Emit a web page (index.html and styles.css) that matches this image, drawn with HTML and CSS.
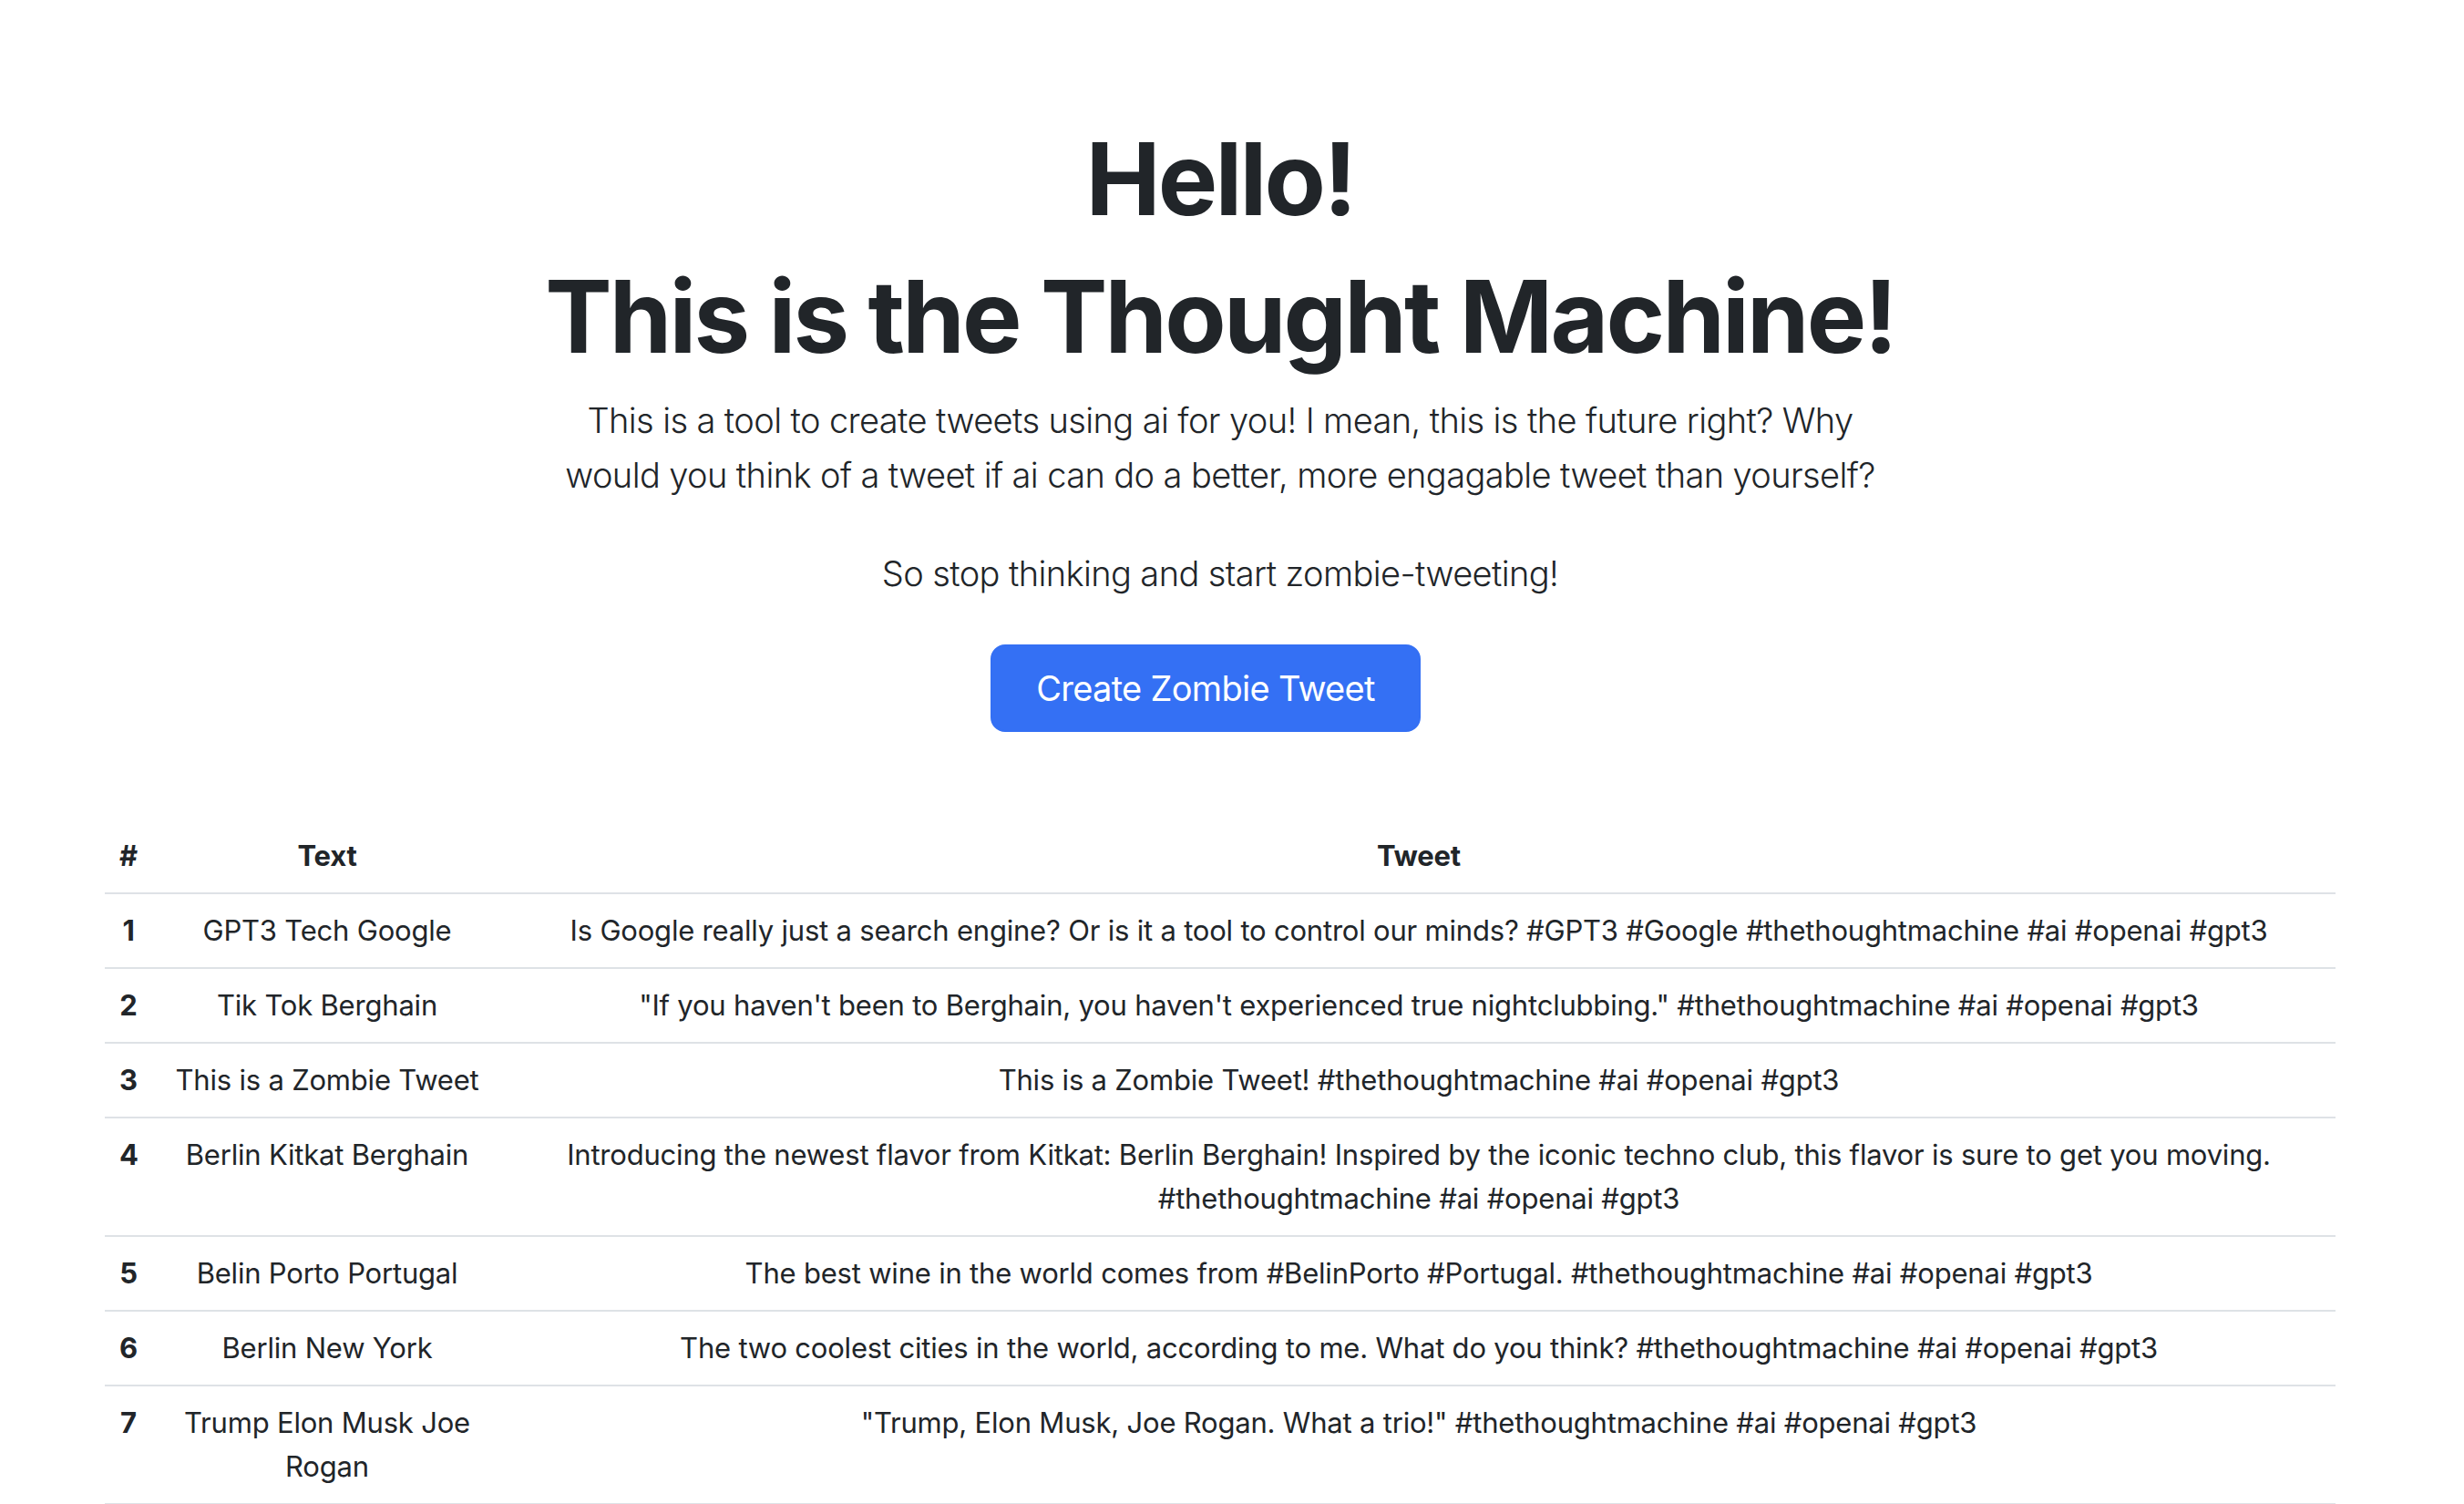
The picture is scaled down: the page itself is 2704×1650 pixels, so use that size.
FILE: index.html
```html
<!DOCTYPE html>
<html lang="en">
<head>
<meta charset="utf-8">
<title>The Thought Machine</title>
<link rel="stylesheet" href="styles.css">
</head>
<body>
<main class="page">
  <section class="hero">
    <h1 class="title">Hello!</h1>
    <h1 class="title">This is the Thought Machine!</h1>
    <div class="intro">
      <p class="lead">This is a tool to create tweets using ai for you! I mean, this is the future right? Why would you think of a tweet if ai can do a better, more engagable tweet than yourself?</p>
      <p class="lead">So stop thinking and start zombie-tweeting!</p>
      <div class="actions">
        <button type="button" class="btn">Create Zombie Tweet</button>
      </div>
    </div>
  </section>
  <table class="tweets">
    <colgroup>
      <col class="col-num">
      <col class="col-text">
      <col class="col-tweet">
    </colgroup>
    <thead>
      <tr><th>#</th><th>Text</th><th>Tweet</th></tr>
    </thead>
    <tbody>
      <tr><th>1</th><td>GPT3 Tech Google</td><td>Is Google really just a search engine? Or is it a tool to control our minds? #GPT3 #Google #thethoughtmachine #ai #openai #gpt3</td></tr>
      <tr><th>2</th><td>Tik Tok Berghain</td><td>"If you haven't been to Berghain, you haven't experienced true nightclubbing." #thethoughtmachine #ai #openai #gpt3</td></tr>
      <tr><th>3</th><td>This is a Zombie Tweet</td><td>This is a Zombie Tweet! #thethoughtmachine #ai #openai #gpt3</td></tr>
      <tr><th>4</th><td>Berlin Kitkat Berghain</td><td>Introducing the newest flavor from Kitkat: Berlin Berghain! Inspired by the iconic techno club, this flavor is sure to get you moving. #thethoughtmachine #ai #openai #gpt3</td></tr>
      <tr><th>5</th><td>Belin Porto Portugal</td><td>The best wine in the world comes from #BelinPorto #Portugal. #thethoughtmachine #ai #openai #gpt3</td></tr>
      <tr><th>6</th><td>Berlin New York</td><td>The two coolest cities in the world, according to me. What do you think? #thethoughtmachine #ai #openai #gpt3</td></tr>
      <tr><th>7</th><td>Trump Elon Musk Joe Rogan</td><td>"Trump, Elon Musk, Joe Rogan. What a trio!" #thethoughtmachine #ai #openai #gpt3</td></tr>
    </tbody>
  </table>
</main>
</body>
</html>
```

FILE: styles.css
```css
html, body {
  margin: 0;
  background: #ffffff;
}

body {
  font-family: Inter, "Noto Sans", sans-serif;
  color: #212529;
}

.page {
  width: 2678px;
  box-sizing: border-box;
  padding: 129px 115px 0;
}

.hero {
  text-align: center;
}

.title {
  font-size: 110px;
  font-weight: 700;
  line-height: 134px;
  letter-spacing: -2.8px;
  margin: 0 0 17px;
}

.intro {
  max-width: 1460px;
  margin: 0 auto;
}

.lead {
  font-size: 38px;
  font-weight: 300;
  line-height: 60px;
  letter-spacing: -0.6px;
  margin: 0 0 48px;
}

.actions {
  display: flex;
  justify-content: center;
}

.btn {
  font-family: inherit;
  font-size: 38px;
  font-weight: 400;
  line-height: 60px;
  letter-spacing: -0.7px;
  padding: 16px 48px;
  margin: 0 32px 0 0;
  color: #ffffff;
  background: #3470f4;
  border: 2px solid #3470f4;
  border-radius: 16px;
  cursor: pointer;
}

.tweets {
  width: 100%;
  margin-top: 96px;
  border-collapse: collapse;
  table-layout: fixed;
  font-size: 31px;
  line-height: 48px;
  letter-spacing: -0.2px;
}

.col-num { width: 52px; }
.col-text { width: 384px; }

.tweets th,
.tweets td {
  padding: 16px;
  text-align: center;
  vertical-align: top;
  border-bottom: 2px solid #dee2e6;
}

.tweets th {
  font-weight: 700;
}

.tweets td {
  font-weight: 400;
}
```
